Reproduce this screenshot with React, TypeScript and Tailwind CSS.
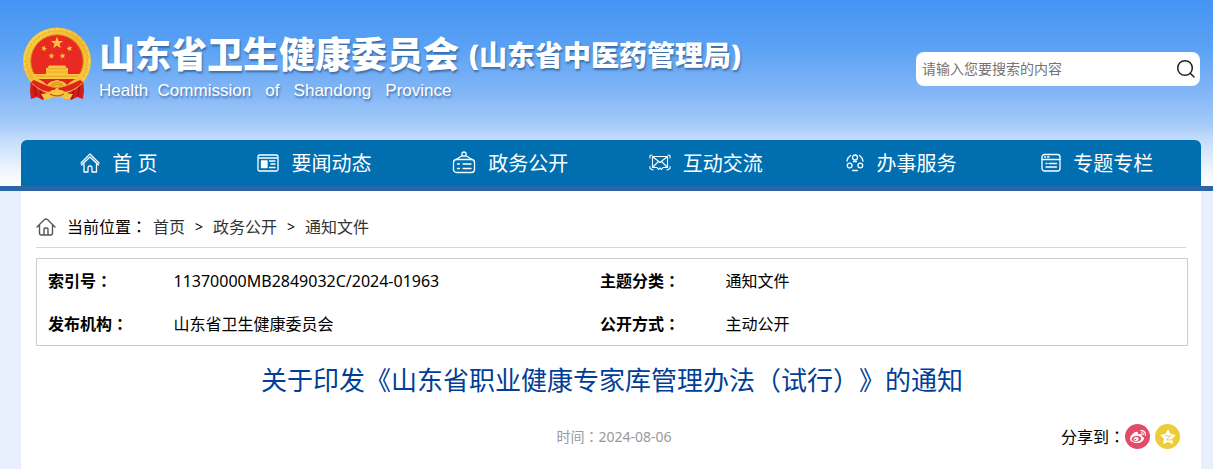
import type { ReactNode } from "react";
import { FaWeibo } from "react-icons/fa";

const star = (cx: number, cy: number, r: number, turn = 0, waist = 0.4) =>
  Array.from({ length: 10 }, (_, i) => {
    const radius = i % 2 ? r * waist : r;
    const a = ((i * 36 - 90 + turn) * Math.PI) / 180;
    return `${(cx + radius * Math.cos(a)).toFixed(2)},${(cy + radius * Math.sin(a)).toFixed(2)}`;
  }).join(" ");

function Emblem() {
  return (
    <svg viewBox="0 0 70 74" className="h-[74px] w-[70px] shrink-0" aria-hidden="true">
      <defs>
        <linearGradient id="gold" x1="0" y1="0" x2="1" y2="1">
          <stop offset="0" stopColor="#fbd44e" />
          <stop offset="0.5" stopColor="#f0b62c" />
          <stop offset="1" stopColor="#f9cf45" />
        </linearGradient>
      </defs>
      <path d="M9 52 Q17 60 35 61 Q53 60 61 52 L62 64 L61 72 L55 70 L49 73 L45 68 L25 68 L21 73 L15 70 L9 72 L8 64Z" fill="#d31d1b" />
      <path d="M12 57 L14 69 M18 61 L20 72 M58 57 L56 69 M52 61 L50 72" stroke="#a60f12" strokeWidth="1.3" fill="none" />
      <ellipse cx="35" cy="34" rx="34" ry="33.5" fill="url(#gold)" />
      <ellipse cx="35" cy="34" rx="30.5" ry="30" fill="none" stroke="#e5a92a" strokeWidth="1.2" strokeDasharray="1.6 2" />
      <ellipse cx="35" cy="34" rx="32.3" ry="31.8" fill="none" stroke="#fbdc6b" strokeWidth="1" strokeDasharray="3 3" />
      <circle cx="35" cy="34" r="26.3" fill="#e92a22" stroke="#d5911c" strokeWidth="1" />
      <g fill="#fbc53d">
        <polygon points={star(35, 16, 6.4)} />
        <polygon points={star(22, 21.5, 3.2, 12)} />
        <polygon points={star(47.5, 21.5, 3.2, -12)} />
        <polygon points={star(29.5, 29, 3.2, 12)} />
        <polygon points={star(40.5, 29, 3.2, -12)} />
        <path d="M27 38.5 H43 L44.5 41 H46 V44.5 H24 V41 H25.5Z" />
        <path d="M24 44 H46 V47 H60 Q58 50 57 52 H13 Q11 50 10 47 H24Z" />
      </g>
      <path d="M26 41.8 H44 M14 49.3 H56 M24 45 H46" stroke="#e09a20" strokeWidth="0.7" />
      <path d="M12 52 H58 L51 60 H19Z" fill="#df231e" />
      <path d="M9 50 Q18 51 25 58 Q28 54 32 54 Q35 52 38 54 Q42 54 45 58 Q52 51 61 50 Q56 59 46 62 Q40 59 35 60 Q30 59 24 62 Q14 59 9 50Z" fill="#f5bf35" />
      <path d="M29 58 Q35 53 41 58 M26 61 Q35 54 44 61" stroke="#d38b1b" fill="none" />
      <path d="M12 53 Q26 60 34 61 L31 65 Q18 65 9 55Z M58 53 Q44 60 36 61 L39 65 Q52 65 61 55Z" fill="#e0231e" />
      <path d="M19 67 Q26 67 30 63 H40 Q44 67 51 67 L48 72 Q41 73 39 69 Q35 72 31 69 Q29 73 22 72Z" fill="#f5c53d" />
      <path d="M28 67 Q35 71 42 67" stroke="#d52a1d" fill="none" />
    </svg>
  );
}

function LineIcon({ box, className, children }: { box: string; className: string; children: ReactNode }) {
  return (
    <svg viewBox={box} className={className} fill="none" stroke="currentColor" strokeWidth="1.3" strokeLinecap="round" strokeLinejoin="round" aria-hidden="true">
      {children}
    </svg>
  );
}

const navItems = [
  {
    label: "首 页",
    icon: (
      <LineIcon box="0 0 20 20" className="h-5 w-5">
        <path d="M1 10 L10 1 L19 10 M1.5 12 L10 4 L18.5 12" />
        <path d="M4 11 V19 H8 V14.5 Q8 13 10 13 Q12 13 12 14.5 V19 H16.5 V11" />
      </LineIcon>
    ),
  },
  {
    label: "要闻动态",
    icon: (
      <LineIcon box="0 0 22 20" className="h-5 w-[22px]">
        <rect x="1" y="2" width="20" height="16" rx="1.5" />
        <path d="M2 5 H20" />
        <rect x="4.5" y="8" width="5.5" height="6.5" fill="currentColor" />
        <path d="M12.5 8 H18 M14 11 H18 M12.5 14.5 H18" />
      </LineIcon>
    ),
  },
  {
    label: "政务公开",
    icon: (
      <LineIcon box="0 0 24 24" className="h-6 w-6">
        <rect x="1.5" y="8.5" width="21" height="13" rx="3" />
        <path d="M4 8.5 L10.5 4.5 M20 8.5 L13.5 4.5 M10 5 V2 Q12 0 14 2 V5Z" />
        <path d="M5.5 13 H7.5 M11 13 H19 M5.5 17.5 H7.5 M11 17.5 H19" />
      </LineIcon>
    ),
  },
  {
    label: "互动交流",
    icon: (
      <LineIcon box="0 0 22 20" className="h-5 w-[22px]">
        <path d="M3.5 3.5 H18.5 V14.5 H14 L12.5 16.5 L11 15 L9.5 16.5 L8 14.5 H3.5Z M3.5 3.5 L11 9.5 L18.5 3.5 M3.5 14.5 L9 9 M18.5 14.5 L13 9" strokeWidth="1.1" />
        <path d="M1 5 V2.5 L3 2 M21 5 V2.5 L19 2 M1 13.5 V15.5 L4 17 M21 13.5 V15.5 L18 17" strokeWidth="1.1" />
      </LineIcon>
    ),
  },
  {
    label: "办事服务",
    icon: (
      <LineIcon box="0 0 18 20" className="h-5 w-[18px]">
        <circle cx="9" cy="4.5" r="2.5" />
        <circle cx="3.7" cy="12.5" r="2.4" />
        <circle cx="14.3" cy="12.5" r="2.4" />
        <path d="M4.5 2.5 Q1.5 4.5 1 8 M13.5 2.5 Q16.5 4.5 17 8 M7.5 8.5 H10.5 M6.5 17.5 H11.5" />
      </LineIcon>
    ),
  },
  {
    label: "专题专栏",
    icon: (
      <LineIcon box="0 0 20 20" className="h-5 w-5">
        <rect x="1" y="1.5" width="18" height="16.5" rx="2.5" />
        <path d="M1 6.5 H19 M3.5 4 H4.5 M6.5 4 H8 M5 10.5 H6 M8 10.5 H15.5 M5 14 H15.5" />
      </LineIcon>
    ),
  },
];

const details = [
  [
    ["索引号", "11370000MB2849032C/2024-01963"],
    ["主题分类", "通知文件"],
  ],
  [
    ["发布机构", "山东省卫生健康委员会"],
    ["公开方式", "主动公开"],
  ],
];

function Centered({ children }: { children: string }) {
  return <span className="font-['Noto_Sans_CJK_TC',sans-serif] leading-none">{children}</span>;
}

export default function App() {
  return (
    <div className="flex min-h-screen flex-col bg-[#e8effd] font-['Noto_Sans','Noto_Sans_CJK_SC',sans-serif] text-base text-black [text-spacing-trim:space-all]">
      <header className="border-b-[5px] border-[#2b66a8] bg-[linear-gradient(to_bottom,#4594f3_0%,#5aa1f4_25%,#83b6f6_50%,#a2c9f9_66%,#c4dcfb_75%,#edf5fe_91%,#ffffff_100%)] pr-3 pl-[21px]">
        <div className="flex h-[140px] items-start justify-between">
          <div className="flex gap-[7px] pt-[27px] pl-px text-white [text-shadow:1px_2px_2px_rgba(40,75,120,0.65)]">
            <Emblem />
            <div className="whitespace-nowrap">
              <div className="flex items-center gap-2.5 leading-[56px] font-black">
                <span className="text-4xl leading-[56px]">山东省卫生健康委员会</span>
                <span className="text-[28px] leading-[56px]">(山东省中医药管理局)</span>
              </div>
              <div className="font-['Liberation_Sans',sans-serif] text-[17px] leading-4 whitespace-pre">
                Health  Commission   of   Shandong   Province
              </div>
            </div>
          </div>
          <form className="mt-[52px] mr-px flex h-[34px] w-[284px] items-center rounded-lg bg-white" onSubmit={(e) => e.preventDefault()}>
            <input
              type="search"
              aria-label="搜索"
              placeholder="请输入您要搜索的内容"
              className="min-w-0 flex-1 bg-transparent pl-1.5 text-sm outline-none placeholder:text-[#757575]"
            />
            <button type="submit" aria-label="提交搜索" className="px-1 text-[#222]">
              <svg viewBox="0 0 20 20" className="h-5 w-5" fill="none" stroke="currentColor" strokeWidth="1.5" strokeLinecap="round">
                <circle cx="9" cy="9" r="7.3" />
                <path d="M14.5 14.5 L18 18" />
              </svg>
            </button>
          </form>
        </div>
        <nav className="grid h-[46px] grid-cols-6 rounded-t-md bg-[#006eaf] pr-1.5 text-xl text-white">
          {navItems.map((item) => (
            <a key={item.label} href="#" className="flex items-center justify-center gap-3 whitespace-nowrap">
              {item.icon}
              <span className="pt-0.5">{item.label}</span>
            </a>
          ))}
        </nav>
      </header>

      <main className="mr-3 ml-[21px] flex-1 bg-white pr-[13px] pb-4 pl-[15px]">
        <div className="mr-0.5 flex h-[57px] items-center border-b border-[#d5d5d5] pt-4">
          <svg viewBox="0 0 20 20" className="mr-[11px] h-5 w-5" fill="none" stroke="#555" strokeWidth="1.4" strokeLinecap="round" strokeLinejoin="round" aria-hidden="true">
            <path d="M1 10 L8.5 2.5 Q10 1.5 11.5 2.5 L19 10 M3.5 8.5 V16 Q3.5 18 5.5 18 H14.5 Q16.5 18 16.5 16 V8.5 M8 18 V12 Q8 11 9 11 H11 Q12 11 12 12 V18" />
          </svg>
          <span>
            当前位置
            <Centered>：</Centered>
          </span>
          <ol className="flex gap-2.5 pl-1.5 text-[#333]">
            <li><a href="#">首页</a></li>
            <li className="text-sm leading-6 text-black" aria-hidden="true">&gt;</li>
            <li><a href="#">政务公开</a></li>
            <li className="text-sm leading-6 text-black" aria-hidden="true">&gt;</li>
            <li><a href="#">通知文件</a></li>
          </ol>
        </div>

        <table className="mt-2.5 w-full table-fixed border-separate border-spacing-0 border border-[#ccc] text-left">
          <colgroup>
            <col className="w-[11%]" />
            <col className="w-[37%]" />
            <col className="w-[11%]" />
            <col />
          </colgroup>
          <tbody>
            {details.map((row, i) => (
              <tr key={i} className="h-[43px]">
                {row.map(([name, value]) => [
                  <th key={name} scope="row" className="p-0 pl-[11px] font-bold">
                    {name}
                    <Centered>：</Centered>
                  </th>,
                  <td key={value} className="p-0 pl-2.5">{value}</td>,
                ])}
              </tr>
            ))}
          </tbody>
        </table>

        <h1 className="pt-4 text-center text-[26px] leading-9 text-[#003e99]">
          关于印发《山东省职业健康专家库管理办法
          <Centered>（</Centered>
          试行
          <Centered>）</Centered>
          》的通知
        </h1>

        <div className="mt-[26px] grid grid-cols-[1fr_auto_1fr] items-center">
          <p className="col-start-2 pl-1 text-sm text-[#999]">
            时间
            <Centered>：</Centered>
            2024-08-06
          </p>
          <div className="flex items-center justify-end pr-2">
            <span>
              分享到
              <Centered>：</Centered>
            </span>
            <div className="flex gap-[5px]">
              <a href="#" aria-label="分享到微博" className="flex h-[25px] w-[25px] items-center justify-center rounded-full bg-[#e24c69] text-white">
                <FaWeibo className="h-4 w-4" />
              </a>
              <a href="#" aria-label="分享到QQ空间" className="flex h-[25px] w-[25px] items-center justify-center rounded-full bg-[#eecb37]">
                <svg viewBox="0 0 18 18" className="h-[18px] w-[18px]" aria-hidden="true">
                  <polygon points={star(9, 9.5, 7.2, 0, 0.5)} fill="#fff" stroke="#fff" strokeWidth="1.2" strokeLinejoin="round" />
                  <path d="M6 8 Q9 7.3 12 8 L7 11.8 Q10 12.4 13.5 11.6" fill="none" stroke="#eecb37" strokeWidth="0.9" />
                </svg>
              </a>
            </div>
          </div>
        </div>
      </main>
    </div>
  );
}
